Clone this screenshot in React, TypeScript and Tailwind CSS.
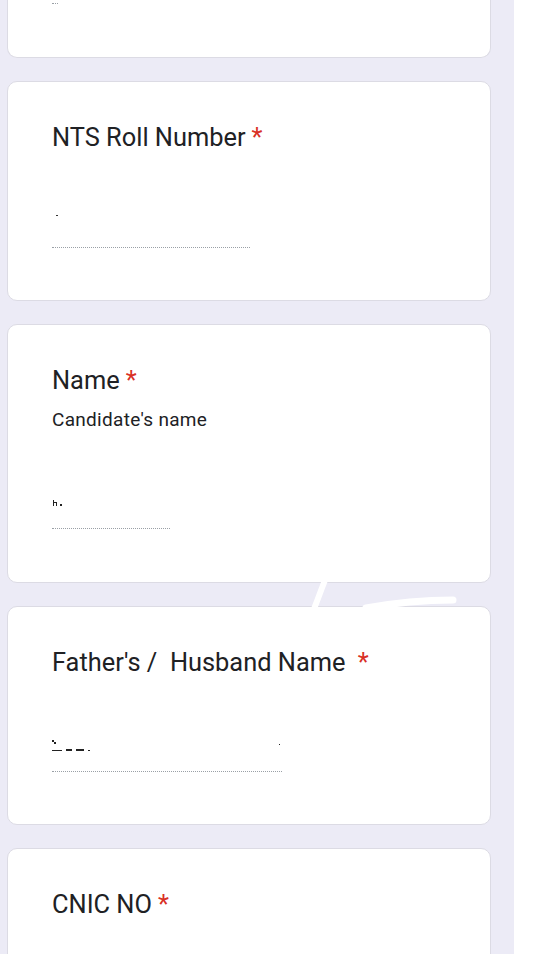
import React from "react";

const Req = () => <span className="pl-[6px] text-[#d93025]">*</span>;

function Answer({ width, marks }: { width: number; marks?: React.ReactNode }) {
  return (
    <div className="flex flex-col">
      <svg width={240} height={41} className="block">
        {marks}
      </svg>
      <div
        className="border-b border-dotted border-[#9aa0a6]"
        style={{ width }}
      />
    </div>
  );
}

export default function App() {
  return (
    <div className="relative flex h-[954px] w-[543px] overflow-hidden bg-white font-['Roboto',sans-serif] text-[#202124]">
      <main className="flex w-[514px] flex-col gap-[23px] bg-[#ecebf6] pl-[7px] pr-[23px]">
        {/* previous question, scrolled off */}
        <div className="h-[58px] shrink-0 rounded-b-[10px] border-x border-b border-[#dcdbe4] bg-white pl-[44px] pt-[3px]">
          <div className="w-[6px] border-b border-dotted border-[#9aa0a6]" />
        </div>

        <section className="shrink-0 rounded-[10px] border border-[#dcdbe4] bg-white pb-[52px] pl-[44px] pt-[39px]">
          <h2 className="text-[25.4px] leading-[32px]">
            NTS Roll Number
            <Req />
          </h2>
          <div className="mt-[53px]">
            <Answer
              width={198}
              marks={<rect x={4} y={9} width={2} height={1} fill="#333" />}
            />
          </div>
        </section>

        <section className="shrink-0 rounded-[10px] border border-[#dcdbe4] bg-white pb-[53px] pl-[44px] pt-[39px]">
          <h2 className="text-[25.4px] leading-[32px]">
            Name
            <Req />
          </h2>
          <p className="mt-[12px] text-[19px] leading-[24px] tracking-[0.3px]">
            Candidate's name
          </p>
          <div className="mt-[55px]">
            <Answer
              width={118}
              marks={
                <g fill="#222">
                  <rect x={1} y={13} width={1} height={6} />
                  <rect x={2} y={15} width={3} height={1} />
                  <rect x={4} y={16} width={1} height={3} />
                  <rect x={8} y={17} width={2} height={2} />
                </g>
              }
            />
          </div>
        </section>

        <section className="shrink-0 rounded-[10px] border border-[#dcdbe4] bg-white pb-[52px] pl-[44px] pt-[39px]">
          <h2 className="whitespace-pre text-[25.4px] leading-[32px]">
            {"Father's /  Husband Name "}
            <Req />
          </h2>
          <div className="mt-[52px]">
            <Answer
              width={230}
              marks={
                <g fill="#222">
                  <rect x={0} y={10} width={2} height={2} />
                  <rect x={2} y={12} width={2} height={2} />
                  <rect x={0} y={20} width={10} height={1} />
                  <rect x={14} y={19} width={6} height={2} />
                  <rect x={24} y={19} width={8} height={2} />
                  <rect x={36} y={20} width={2} height={1} />
                  <rect x={227} y={14} width={1} height={1} />
                </g>
              }
            />
          </div>
        </section>

        <section className="shrink-0 rounded-[10px] border border-[#dcdbe4] bg-white pb-[52px] pl-[44px] pt-[39px]">
          <h2 className="text-[25.4px] leading-[32px]">
            CNIC NO
            <Req />
          </h2>
          <div className="mt-[53px]">
            <Answer width={198} />
          </div>
        </section>
      </main>

      {/* white marker strokes drawn over the screenshot */}
      <svg
        className="pointer-events-none absolute left-0 top-0"
        width={543}
        height={954}
      >
        <path
          d="M325 580 L314 609"
          stroke="#fff"
          strokeWidth={6}
          fill="none"
        />
        <path
          d="M366 608 Q410 600 453 600"
          stroke="#fff"
          strokeWidth={7}
          strokeLinecap="round"
          fill="none"
        />
      </svg>
    </div>
  );
}
